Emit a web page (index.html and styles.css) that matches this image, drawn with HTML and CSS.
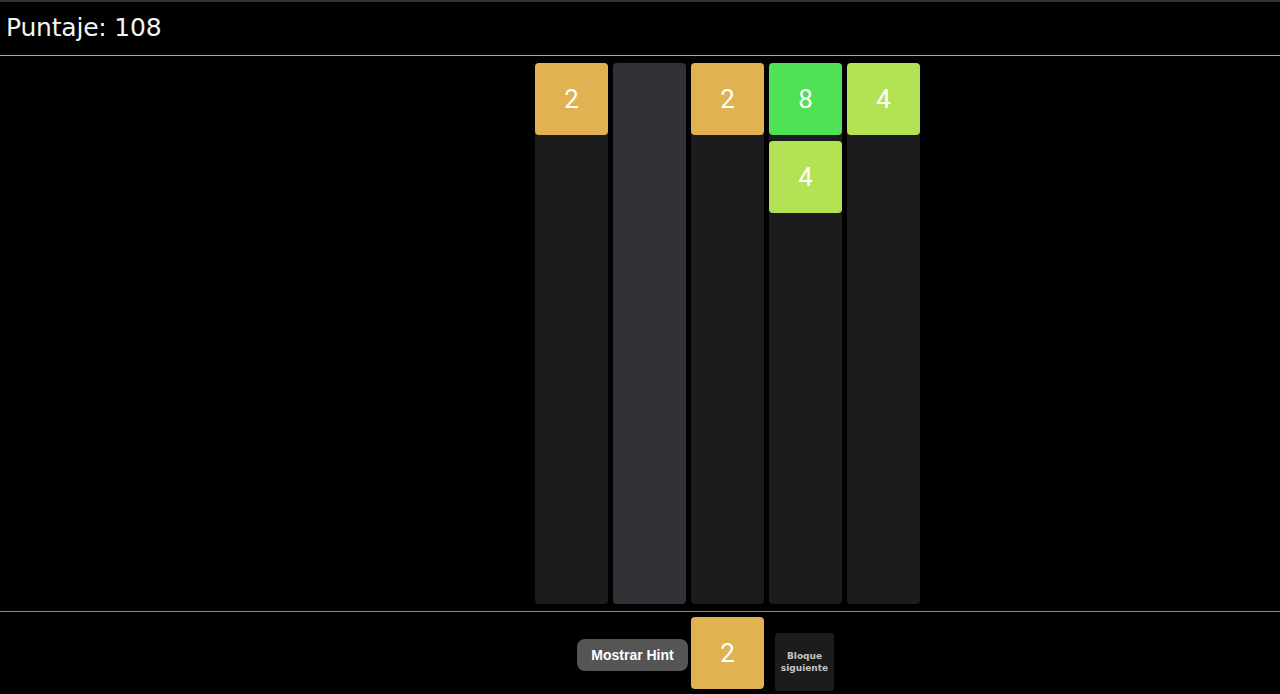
FILE: index.html
```html
<!DOCTYPE html>
<html lang="es">
<head>
<meta charset="utf-8">
<title>Puntaje</title>
<link rel="stylesheet" href="styles.css">
</head>
<body>
<div class="app">
  <header class="header">
    <h1 class="score">Puntaje: 108</h1>
  </header>
  <main class="board-area">
    <div class="board">
      <div class="column">
        <div class="tile t2">2</div>
      </div>
      <div class="column active"></div>
      <div class="column">
        <div class="tile t2">2</div>
      </div>
      <div class="column">
        <div class="tile t8">8</div>
        <div class="tile t4">4</div>
      </div>
      <div class="column">
        <div class="tile t4">4</div>
      </div>
    </div>
  </main>
  <footer class="footer">
    <div class="footer-left">
      <button class="hint-btn">Mostrar Hint</button>
    </div>
    <div class="tile t2 preview">2</div>
    <div class="footer-right">
      <div class="next">Bloque<br>siguiente</div>
    </div>
  </footer>
</div>
</body>
</html>
```
FILE: styles.css
```css
* { box-sizing: border-box; }
html, body {
  margin: 0;
  padding: 0;
  background: #000;
  height: 100%;
  overflow: hidden;
}
.app {
  height: 694px;
  display: flex;
  flex-direction: column;
  border-top: 2px solid #3a2f35;
  color: #fff;
}
.header {
  height: 54px;
  border-bottom: 1px solid #a8a8a8;
  display: flex;
  align-items: center;
  padding-left: 6px;
  padding-bottom: 2px;
}
.score {
  margin: 0;
  font-family: "URW Gothic", "Century Gothic", "DejaVu Sans", sans-serif;
  font-weight: normal;
  font-size: 25px;
  color: #f4f4f4;
  letter-spacing: -0.2px;
}
.board-area {
  height: 556px;
  flex: none;
  border-bottom: 1px solid #8a8a8a;
  display: flex;
  justify-content: center;
  padding-left: 175px;
  padding-top: 7px;
}
.board {
  display: flex;
  gap: 5px;
  height: 541px;
}
.column {
  width: 73px;
  background: #1c1c1e;
  border-radius: 4px;
  display: flex;
  flex-direction: column;
  gap: 6px;
}
.column.active { background: #323236; }
.tile {
  width: 73px;
  height: 72px;
  border-radius: 4px;
  display: flex;
  align-items: center;
  justify-content: center;
  font-family: Roboto, "Liberation Sans", sans-serif;
  font-size: 26px;
  color: #fff;
}
.t2 { background: #e0b252; }
.t4 { background: #b3e255; }
.t8 { background: #50e255; }
.footer {
  flex: 1;
  display: grid;
  grid-template-columns: 1fr auto 1fr;
  align-items: start;
  padding-left: 175px;
}
.footer-left {
  display: flex;
  justify-content: flex-end;
  padding-right: 3px;
  padding-top: 27px;
}
.footer-right {
  display: flex;
  justify-content: flex-start;
  padding-left: 11px;
  padding-top: 21px;
}
.hint-btn {
  width: 111px;
  height: 32px;
  border: none;
  border-radius: 8px;
  background: #555;
  color: #fff;
  font-family: "Liberation Sans", Arial, sans-serif;
  font-weight: bold;
  font-size: 14px;
  padding: 0;
}
.preview {
  height: 72px;
  margin-top: 5px;
}
.next {
  width: 59px;
  height: 58px;
  background: #1c1c1c;
  border-radius: 3px;
  display: flex;
  align-items: center;
  justify-content: center;
  text-align: center;
  font-family: "DejaVu Sans", sans-serif;
  font-weight: bold;
  font-size: 9px;
  line-height: 12px;
  color: #c4c4c4;
}
```
